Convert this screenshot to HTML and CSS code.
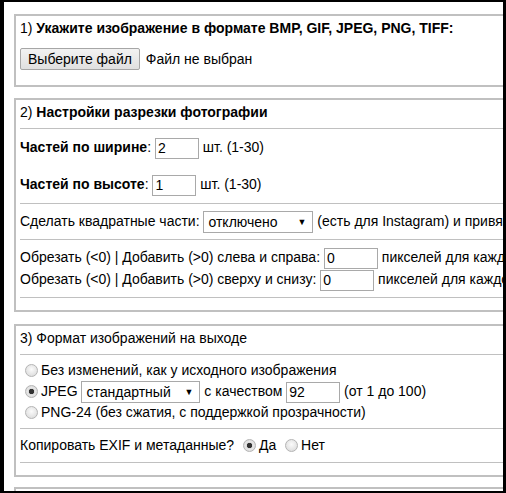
FILE: index.html
```html
<!DOCTYPE html>
<html lang="ru">

<head>
    <meta charset="UTF-8">
    <meta name="viewport" content="width=device-width, initial-scale=1.0">
    <title>Разрезка фотографии</title>
    <link rel="stylesheet" href="styles.css">
</head>

<body>
    <div class="frame">
        <div class="page">
            <section class="box">
                <div class="title">1) <b>Укажите изображение в формате BMP, GIF, JPEG, PNG, TIFF:</b></div>
                <div class="file-row"><label class="file-btn">Выберите файл<input type="file" accept="image/*"></label> Файл не выбран</div>
            </section>

            <section class="box settings">
                <div class="title">2) <b>Настройки разрезки фотографии</b></div>
                <div class="sep"></div>
                <div class="row-count"><b>Частей по ширине</b>: <input class="num" type="text" value="2"> шт. (1-30)</div>
                <div class="row-count"><b>Частей по высоте</b>: <input class="num" type="text" value="1"> шт. (1-30)</div>
                <div class="sep"></div>
                <div class="row-square">Сделать квадратные части: <span class="pick"><select>
                            <option>отключено</option>
                            <option>включено</option>
                        </select></span> (есть для Instagram) и привязать к центру</div>
                <div class="sep"></div>
                <div class="pad-group">
                    <div class="row-pad">Обрезать (&lt;0) | Добавить (&gt;0) слева и справа: <input class="num wide" type="text" value="0"> пикселей для каждой части</div>
                    <div class="row-pad">Обрезать (&lt;0) | Добавить (&gt;0) сверху и снизу: <input class="num wide" type="text" value="0"> пикселей для каждой части</div>
                </div>
                <div class="sep"></div>
                <div class="tail"></div>
            </section>

            <section class="box output">
                <div class="title">3) Формат изображений на выходе</div>
                <div class="sep"></div>
                <div class="radio-group">
                    <div class="row-radio"><label><input type="radio" name="fmt">Без изменений, как у исходного изображения</label></div>
                    <div class="row-radio"><label><input type="radio" name="fmt" checked>JPEG</label> <span class="pick pick-jpeg"><select>
                                <option>стандартный</option>
                                <option>прогрессивный</option>
                            </select></span> с качеством <input class="num wide" type="text" value="92"> (от 1 до 100)</div>
                    <div class="row-radio"><label><input type="radio" name="fmt">PNG-24 (без сжатия, с поддержкой прозрачности)</label></div>
                </div>
                <div class="sep"></div>
                <div class="row-exif">Копировать EXIF и метаданные? <label><input type="radio" name="exif" checked>Да</label> <label><input type="radio" name="exif">Нет</label></div>
                <div class="sep"></div>
                <div class="tail"></div>
            </section>

            <section class="box">
                <div class="title">4) <b>Обработка</b></div>
            </section>
        </div>
    </div>
</body>

</html>
```

FILE: styles.css
```css
* {
    box-sizing: border-box;
}

body {
    margin: 0;
    background-color: #000;
    font: 14px "Liberation Sans", Arial, sans-serif;
    color: #000;
}

.frame {
    width: 506px;
    height: 493px;
    border-style: solid;
    border-color: #000;
    border-width: 2px 3px 2px 4px;
    background-color: #fff;
    overflow: hidden;
}

.page {
    width: 760px;
    padding: 12px 0 0 10px;
}

.box {
    width: 700px;
    border: 2px solid #c0c0c0;
    padding: 4px 4px 0;
    margin-bottom: 11px;
}

.settings {
    margin-bottom: 12px;
}

.output {
    margin-bottom: 10px;
}

.title {
    height: 16px;
    line-height: 16px;
    white-space: nowrap;
}

.title+.sep {
    margin-top: 8px;
}

.sep {
    height: 1px;
    background-color: #c0c0c0;
}

.tail {
    height: 12px;
}

/* file picker */
.file-row {
    margin-top: 12px;
    height: 22px;
    line-height: 22px;
    margin-bottom: 15px;
}

.file-btn {
    display: inline-block;
    height: 22px;
    line-height: 20px;
    padding: 0 7px;
    margin-right: 2px;
    border: 1px solid #a6a6a6;
    border-radius: 2px;
    background: linear-gradient(#f2f2f2, #e0e0e0);
    vertical-align: top;
    cursor: pointer;
}

.file-btn>input {
    display: none;
}

/* rows */
.row-count,
.row-square,
.row-pad,
.row-radio,
.row-exif {
    white-space: nowrap;
}

.row-count {
    height: 37px;
    line-height: 37px;
}

.row-square {
    height: 35px;
    line-height: 35px;
}

.pad-group {
    padding: 6px 0 7px;
}

.row-pad {
    height: 22px;
    line-height: 22px;
}

.radio-group {
    padding: 5px 0;
}

.row-radio {
    height: 21px;
    line-height: 21px;
}

.row-exif {
    height: 33px;
    line-height: 33px;
}

/* controls */
.num {
    width: 44px;
    height: 21px;
    border: 1px solid #a9a9a9;
    padding: 0 2px;
    font: inherit;
    color: #000;
    vertical-align: middle;
    outline: none;
}

.num.wide {
    width: 54px;
}

.pick {
    position: relative;
    display: inline-block;
    line-height: normal;
    vertical-align: middle;
}

.pick select {
    -webkit-appearance: none;
    appearance: none;
    display: block;
    width: 110px;
    height: 22px;
    border: 1px solid #a9a9a9;
    border-radius: 0;
    background-color: #fff;
    padding: 0 0 0 4px;
    font: inherit;
    color: #000;
    outline: none;
}

.pick-jpeg select {
    width: 119px;
}

.pick::after {
    content: "\25BC";
    position: absolute;
    right: 7px;
    top: 6px;
    font-size: 9px;
    line-height: 10px;
    pointer-events: none;
}

input[type="radio"] {
    -webkit-appearance: none;
    appearance: none;
    width: 13px;
    height: 13px;
    margin: 0 3px 0 5px;
    border: 1px solid #b4b4b4;
    border-radius: 50%;
    background: radial-gradient(circle at 50% 40%, #fbfbfb, #d6d6d6);
    vertical-align: middle;
    position: relative;
    top: -1px;
}

input[type="radio"]:checked {
    background: radial-gradient(circle, #333 0, #333 2.4px, #dcdcdc 3px, #e6e6e6 4px, #cfcfcf 100%);
}
```
